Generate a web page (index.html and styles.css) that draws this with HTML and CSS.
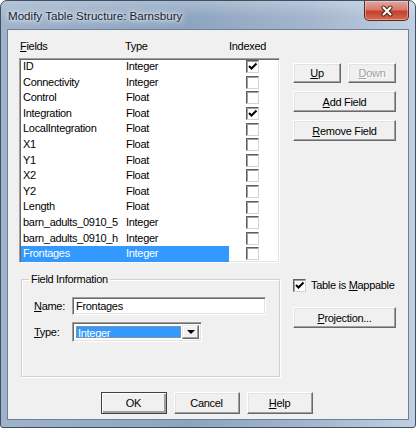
FILE: index.html
```html
<!DOCTYPE html>
<html lang="en">
<head>
  <meta charset="UTF-8" />
  <title>Modify Table Structure: Barnsbury</title>
  <link rel="stylesheet" href="styles.css">
</head>
<body>

  <div class="window">

    <!-- Title bar -->
    <div class="titlebar">
      <span class="title">Modify Table Structure: Barnsbury</span>
      <div class="close">
        <svg width="14" height="12" viewBox="0 0 14 12">
          <path d="M3.5 2.5 L10.5 9.5 M10.5 2.5 L3.5 9.5" stroke="#4a1a14" stroke-width="4" stroke-linecap="round" />
          <path d="M3.5 2.5 L10.5 9.5 M10.5 2.5 L3.5 9.5" stroke="#ffffff" stroke-width="2.2" stroke-linecap="round" />
        </svg>
      </div>
    </div>

    <div class="client">
      <div class="main">

        <div class="left">
          <div class="col-heads">
            <span class="h-name"><u>F</u>ields</span>
            <span class="h-type">Type</span>
            <span class="h-idx">Indexed</span>
          </div>

          <div class="list">
            <div class="row"><span class="c-name">ID</span><span class="c-type">Integer</span><span class="c-idx"><span class="check on"></span></span></div>
            <div class="row"><span class="c-name">Connectivity</span><span class="c-type">Integer</span><span class="c-idx"><span class="check"></span></span></div>
            <div class="row"><span class="c-name">Control</span><span class="c-type">Float</span><span class="c-idx"><span class="check"></span></span></div>
            <div class="row"><span class="c-name">Integration</span><span class="c-type">Float</span><span class="c-idx"><span class="check on"></span></span></div>
            <div class="row"><span class="c-name">LocalIntegration</span><span class="c-type">Float</span><span class="c-idx"><span class="check"></span></span></div>
            <div class="row"><span class="c-name">X1</span><span class="c-type">Float</span><span class="c-idx"><span class="check"></span></span></div>
            <div class="row"><span class="c-name">Y1</span><span class="c-type">Float</span><span class="c-idx"><span class="check"></span></span></div>
            <div class="row"><span class="c-name">X2</span><span class="c-type">Float</span><span class="c-idx"><span class="check"></span></span></div>
            <div class="row"><span class="c-name">Y2</span><span class="c-type">Float</span><span class="c-idx"><span class="check"></span></span></div>
            <div class="row"><span class="c-name">Length</span><span class="c-type">Float</span><span class="c-idx"><span class="check"></span></span></div>
            <div class="row"><span class="c-name">barn_adults_0910_5</span><span class="c-type">Integer</span><span class="c-idx"><span class="check"></span></span></div>
            <div class="row"><span class="c-name">barn_adults_0910_h</span><span class="c-type">Integer</span><span class="c-idx"><span class="check"></span></span></div>
            <div class="row selected"><span class="c-name">Frontages</span><span class="c-type">Integer</span><span class="c-idx"><span class="check"></span></span></div>
          </div>

          <fieldset class="group">
            <legend>Field Information</legend>
            <div class="field-row">
              <label><u>N</u>ame:</label>
              <div class="textbox">Frontages</div>
            </div>
            <div class="field-row">
              <label><u>T</u>ype:</label>
              <div class="combo">
                <span class="combo-text"><span>Integer</span></span>
                <span class="combo-btn"></span>
              </div>
            </div>
          </fieldset>
        </div>

        <div class="right">
          <div class="pair">
            <button class="btn half"><u>U</u>p</button>
            <button class="btn half disabled"><u>D</u>own</button>
          </div>
          <button class="btn wide"><u>A</u>dd Field</button>
          <button class="btn wide"><u>R</u>emove Field</button>

          <div class="mappable">
            <span class="check on"></span>
            <span>Table is <u>M</u>appable</span>
          </div>
          <button class="btn wide"><u>P</u>rojection...</button>
        </div>

      </div>

      <div class="actions">
        <button class="btn action default">OK</button>
        <button class="btn action">Cancel</button>
        <button class="btn action"><u>H</u>elp</button>
      </div>
    </div>

  </div>

</body>
</html>
```

FILE: styles.css
```css
* {
  box-sizing: border-box;
}

body {
  margin: 0;
  padding: 0;
  background-color: #ffffff;
  font-family: 'Liberation Sans', Arial, sans-serif;
}

u {
  text-decoration: underline;
  text-underline-offset: 1px;
}

.window {
  width: 416px;
  height: 428px;
  border: 1px solid #3f5066;
  border-radius: 7px 7px 3px 3px;
  background: linear-gradient(to right, #9fb3cb 0%, #8da4bf 45%, #a3b6cd 75%, #c0d0e2 100%);
  display: flex;
  flex-direction: column;
  overflow: hidden;
}

/* title bar */

.titlebar {
  height: 28px;
  display: flex;
  align-items: flex-start;
  justify-content: space-between;
  padding: 0 6px 0 7px;
  background: linear-gradient(to bottom, rgba(255,255,255,0.25), rgba(255,255,255,0) 60%);
}

.title {
  font-size: 11.6px;
  color: #18222f;
  margin-top: 8px;
  padding: 0 4px 0 0;
  text-shadow: 0 0 6px #dfe8f2, 0 0 10px #dfe8f2, 0 0 3px #ffffff;
}

.close {
  width: 45px;
  height: 20px;
  border: 1px solid #5b2a26;
  border-top: none;
  border-radius: 0 0 5px 5px;
  background: linear-gradient(to bottom, #e4a89e 0%, #d47b6c 45%, #c2422e 55%, #d9684f 100%);
  box-shadow: inset 0 0 0 1px rgba(255,255,255,0.35);
  display: flex;
  align-items: center;
  justify-content: center;
}

/* client area */

.client {
  margin: 0 6px 7px 6px;
  flex: 1;
  border: 1px solid #6e8097;
  background-color: #f0f0f0;
  padding: 10px 12px 0 11px;
  font-size: 11px;
  letter-spacing: -0.3px;
  color: #000000;
  display: flex;
  flex-direction: column;
}

.main {
  display: flex;
  gap: 13px;
}

.left {
  width: 261px;
}

.col-heads {
  height: 18px;
  display: flex;
  line-height: 12px;
}

.h-name {
  width: 106px;
  padding-left: 1px;
}

.h-type {
  width: 104px;
}

/* list view */

.list {
  height: 205px;
  background-color: #ffffff;
  border: 1px solid;
  border-color: #a0a0a0 #ffffff #ffffff #a0a0a0;
  box-shadow: inset 1px 1px #696969, inset -1px -1px #e3e3e3;
  padding: 0 2px 0 1px;
}

.row {
  height: 15.6px;
  display: flex;
  align-items: center;
}

.c-name {
  width: 105px;
  height: 100%;
  padding-left: 2px;
  line-height: 15.6px;
}

.c-type {
  width: 103px;
  height: 100%;
  line-height: 15.6px;
}

.c-idx {
  flex: 1;
  display: flex;
  padding-left: 17px;
}

.row.selected .c-name,
.row.selected .c-type {
  background-color: #3399ff;
  color: #ffffff;
}

.check {
  width: 13px;
  height: 13px;
  display: inline-block;
  background-color: #ffffff;
  border: 1px solid;
  border-color: #5f5f5f #d4d4d4 #d4d4d4 #5f5f5f;
  box-shadow: inset 1px 1px #a0a0a0;
}

.check.on {
  background: #ffffff url("data:image/svg+xml;utf8,<svg xmlns='http://www.w3.org/2000/svg' width='11' height='11'><path d='M2 5 L4.5 7.5 L9.5 2.5' stroke='black' stroke-width='2' fill='none'/></svg>") no-repeat 0 0;
}

/* group box */

.group {
  margin: 10px 0 0 2px;
  width: 259px;
  height: 104px;
  padding: 0 0 0 12px;
  border: 1px solid #d0d0d0;
  box-shadow: inset 1px 1px #ffffff, 1px 1px #ffffff;
}

.group legend {
  margin-left: -5px;
  padding: 0 2px;
  line-height: 12px;
}

.field-row {
  display: flex;
  align-items: center;
  margin-top: 7px;
}

.field-row:first-of-type {
  margin-top: 12px;
}

.field-row label {
  width: 38px;
}

.textbox {
  width: 194px;
  height: 18px;
  background-color: #ffffff;
  border: 1px solid;
  border-color: #a0a0a0 #ffffff #ffffff #a0a0a0;
  box-shadow: inset 1px 1px #696969, inset -1px -1px #e3e3e3;
  padding: 2px 3px;
  line-height: 13px;
}

.combo {
  width: 130px;
  height: 20px;
  display: flex;
  background-color: #ffffff;
  border: 1px solid;
  border-color: #a0a0a0 #ffffff #ffffff #a0a0a0;
  box-shadow: inset 1px 1px #696969, inset -1px -1px #e3e3e3;
  padding: 2px;
}

.combo-text {
  flex: 1;
  padding: 1px;
}

.combo-text span {
  display: block;
  height: 100%;
  background-color: #3399ff;
  color: #ffffff;
  border: 1px dotted #c98a4a;
  padding-left: 1px;
  line-height: 12px;
}

.combo-btn {
  width: 17px;
  background-color: #f0f0f0;
  border: 1px solid;
  border-color: #e3e3e3 #696969 #696969 #e3e3e3;
  box-shadow: inset -1px -1px #a0a0a0, inset 1px 1px #ffffff;
  display: flex;
  align-items: center;
  justify-content: center;
}

.combo-btn::after {
  content: "";
  border-left: 4px solid transparent;
  border-right: 4px solid transparent;
  border-top: 4px solid #000000;
}

/* right column */

.right {
  width: 103px;
  padding-top: 23px;
  display: flex;
  flex-direction: column;
}

.pair {
  display: flex;
  gap: 7px;
}

.btn {
  font-family: inherit;
  font-size: 11px;
  letter-spacing: -0.3px;
  color: #000000;
  background-color: #f0f0f0;
  border: 1px solid;
  border-color: #ffffff #696969 #696969 #ffffff;
  box-shadow: inset -1px -1px #a0a0a0, inset 1px 1px #e3e3e3;
  padding: 0;
  margin: 0;
}

.btn.half {
  width: 48px;
  height: 20px;
}

.btn.wide {
  width: 103px;
  height: 21px;
  margin-top: 8px;
}

.btn.disabled {
  color: #a0a0a0;
  text-shadow: 1px 1px #ffffff;
}

.mappable {
  display: flex;
  align-items: center;
  gap: 5px;
  margin-top: 137px;
  height: 14px;
}

.mappable + .btn.wide {
  margin-top: 15px;
}

/* bottom buttons */

.actions {
  display: flex;
  justify-content: center;
  gap: 7px;
  margin-top: 15px;
  padding-right: 2px;
}

.btn.action {
  width: 66px;
  height: 22px;
}

.btn.default {
  border-color: #404040;
  box-shadow: inset 1px 1px #ffffff, inset -2px -2px #a0a0a0;
}
```
